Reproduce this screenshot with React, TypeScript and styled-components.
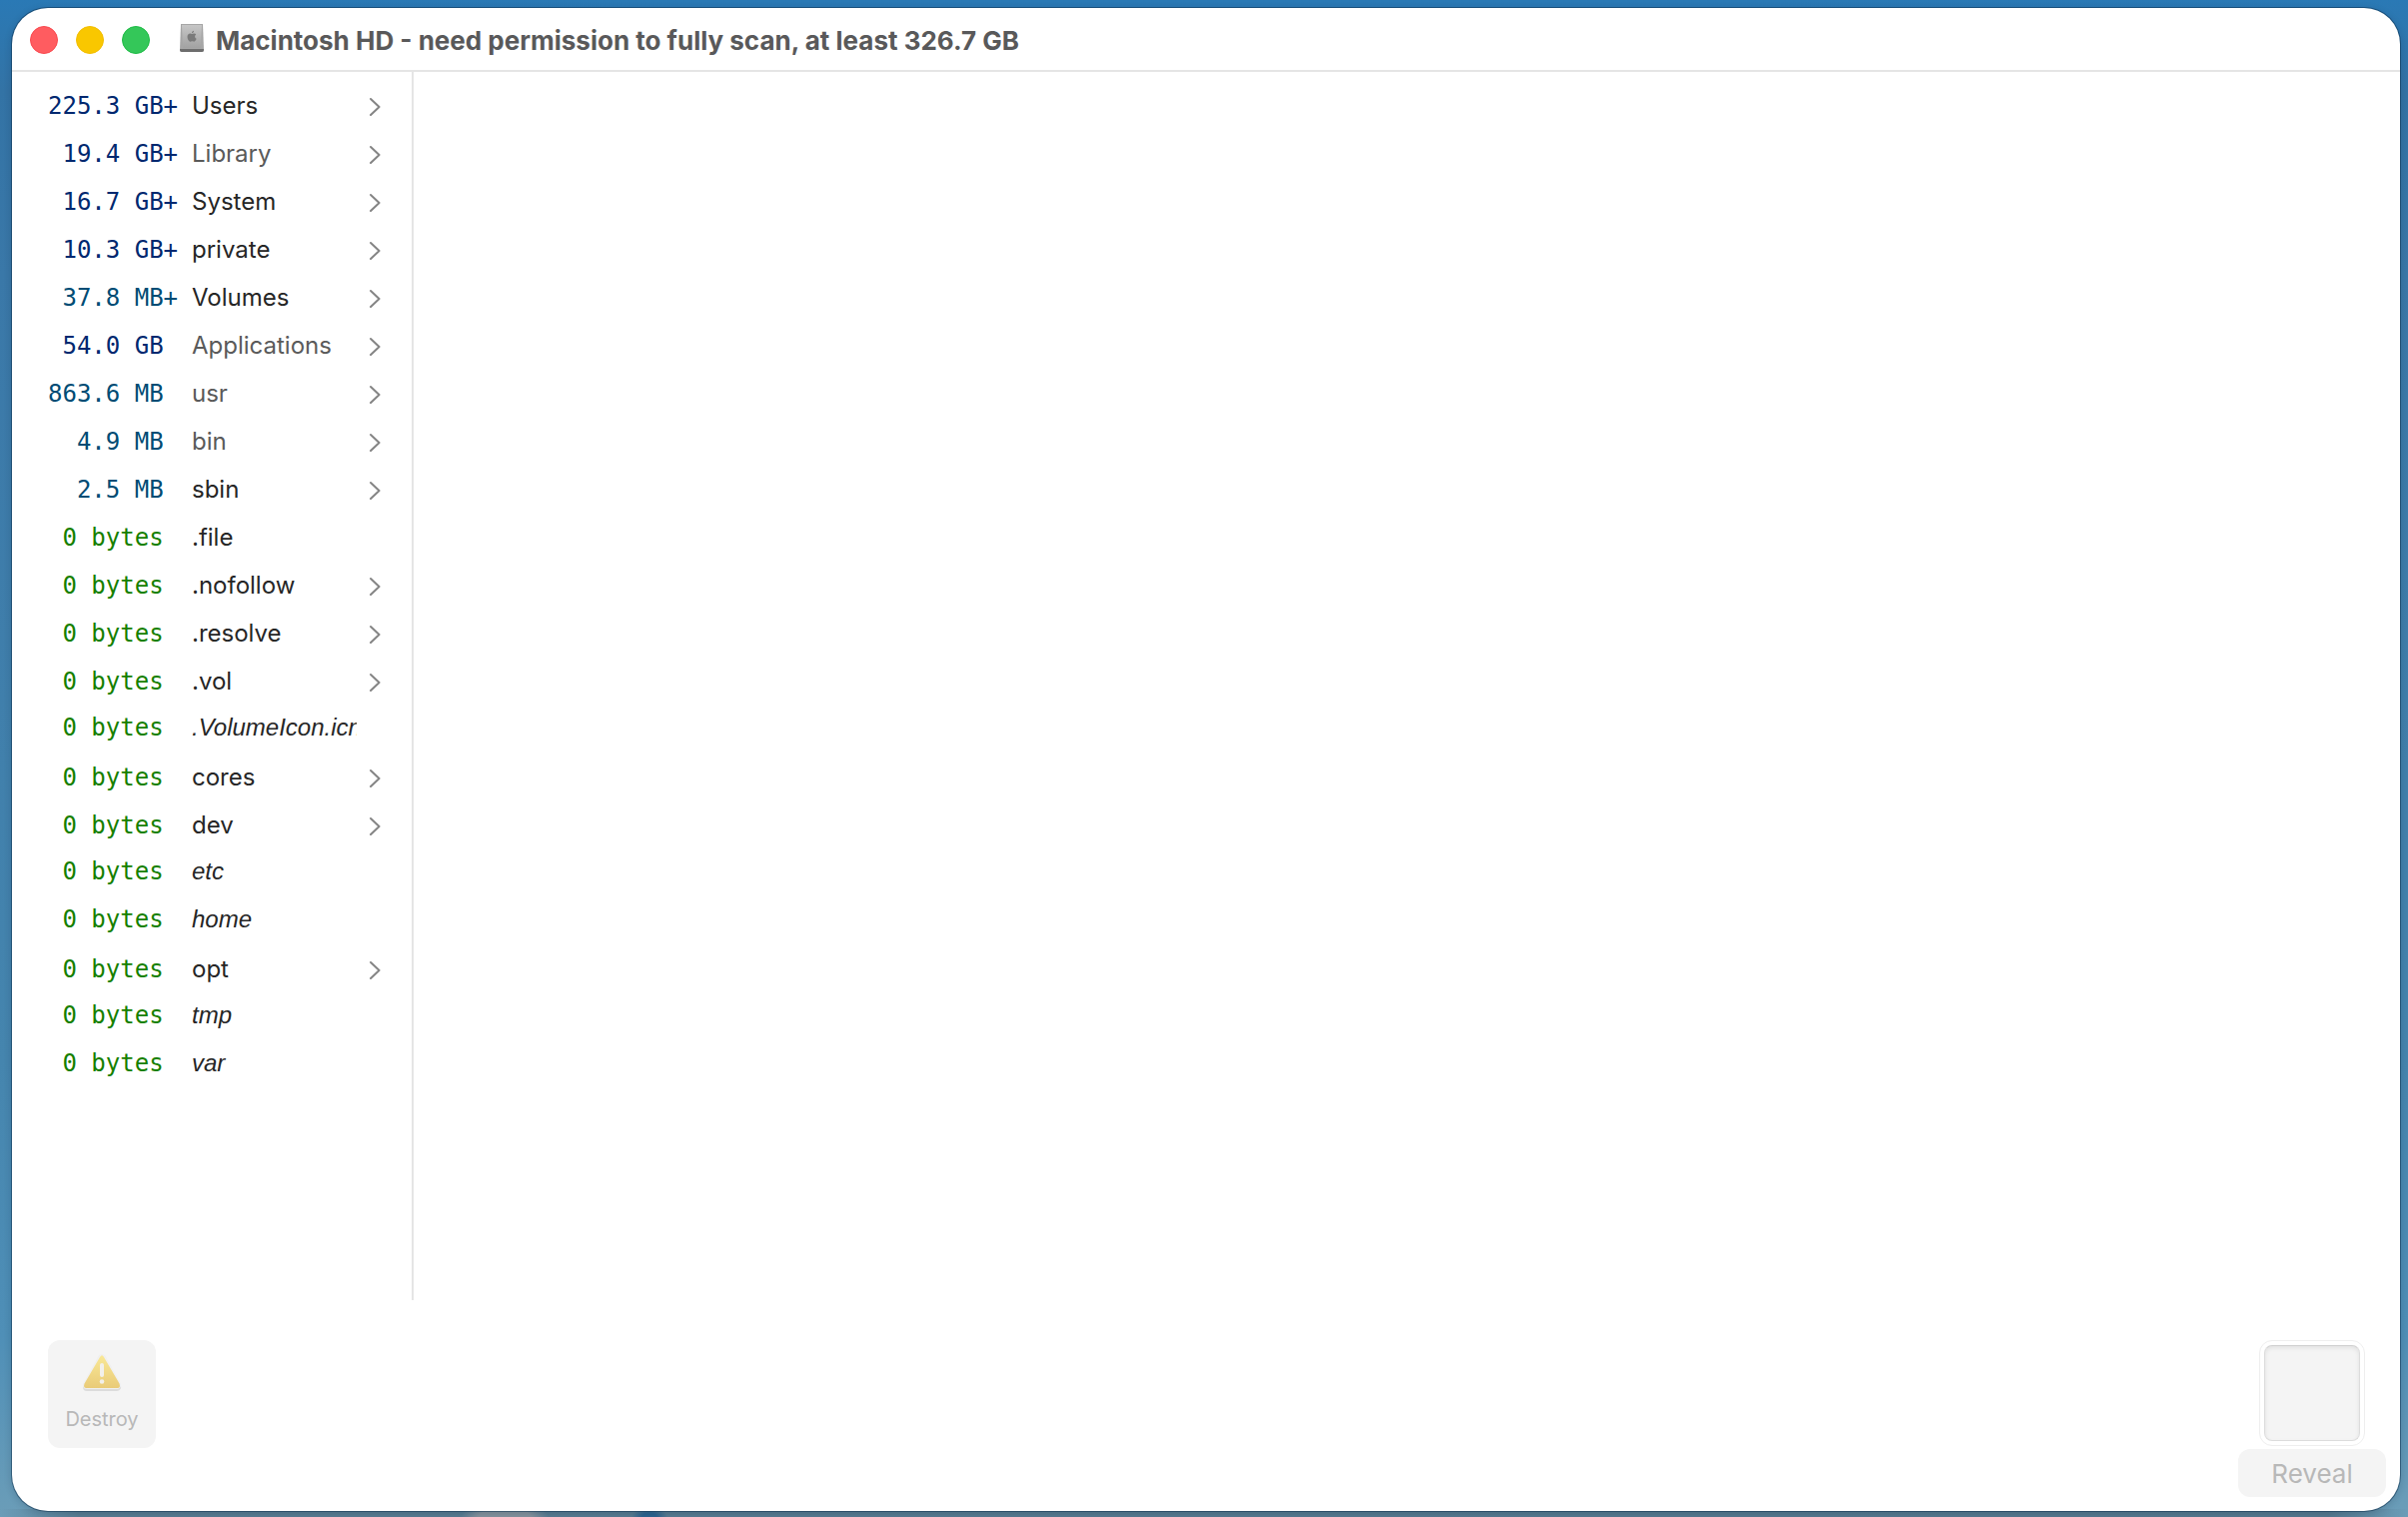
import React from "react";
import styled, { createGlobalStyle, css } from "styled-components";

const ui = `Inter, "Liberation Sans", sans-serif`;

const GlobalStyle = createGlobalStyle`
  *, *::before, *::after { box-sizing: border-box; }
  body { margin: 0; background: #2a79b5; font-family: ${ui}; }
`;

const Desktop = styled.div`
  display: flex;
  min-height: 100vh;
  padding: 8px 8px 6px 12px;
  background:
    radial-gradient(ellipse 44px 14px at 505px 100%, #84939e 60%, transparent 100%),
    radial-gradient(ellipse 18px 10px at 650px 100%, #2c648f 40%, transparent 100%),
    linear-gradient(90deg, transparent 0, #587d93 80px, #55798f calc(100% - 80px), transparent 100%) 0 100% / 100% 8px no-repeat,
    linear-gradient(180deg, #2a79b5 0%, #3373a5 6%, #3a78a8 18%, #4585ae 70%, #4f8fb7 88%, #6b9db8 100%);
`;

const Window = styled.main`
  flex: 1;
  display: flex;
  flex-direction: column;
  min-width: 0;
  overflow: hidden;
  background: #fff;
  border-radius: 36px;
  box-shadow: 0 0 0 1px rgba(10, 45, 75, 0.5), 0 2px 8px rgba(0, 20, 40, 0.2);
`;

const TitleBar = styled.header`
  display: flex;
  align-items: center;
  height: 64px;
  padding: 2px 18px 0;
  border-bottom: 2px solid #e5e5e5;
`;

const Lights = styled.div`
  display: flex;
  gap: 18px;
  margin-right: 30px;
`;

const Light = styled.button<{ $fill: string; $edge: string }>`
  width: 28px;
  height: 28px;
  padding: 0;
  border: 1px solid ${(p) => p.$edge};
  border-radius: 50%;
  background: ${(p) => p.$fill};
`;

const DriveIcon = styled.svg`
  width: 24px;
  height: 28px;
  margin: 0 12px 4px 0;
`;

const Title = styled.h1`
  margin: 0;
  padding-top: 2px;
  color: #59595a;
  font-size: 26px;
  line-height: 32px;
  font-weight: 700;
  white-space: nowrap;
`;

const Body = styled.section`
  flex: 1;
  display: flex;
`;

const Column = styled.ul`
  width: 402px;
  margin: 0;
  padding: 10px 31px 0 36px;
  list-style: none;
  border-right: 2px solid #e5e5e5;
`;

const Row = styled.button<{ $link?: boolean }>`
  display: grid;
  grid-template-columns: 144px 165px 1fr;
  align-items: center;
  width: 100%;
  height: 48px;
  padding: 0;
  border: 0;
  background: none;
  text-align: left;
  ${(p) => p.$link && css`padding-bottom: 4px;`}
`;

const tones = { gb: "#00286f", mb: "#004c74", zero: "#168000" };

const Size = styled.span<{ $tone: keyof typeof tones }>`
  color: ${(p) => tones[p.$tone]};
  font: 24px/32px "DejaVu Sans Mono", monospace;
  white-space: pre;
`;

const Name = styled.span<{ $muted?: boolean; $link?: boolean }>`
  overflow: hidden;
  color: ${(p) => (p.$muted ? "#5a5a5a" : "#262626")};
  font-family: ${(p) => (p.$link ? `"Liberation Sans", sans-serif` : ui)};
  font-size: 24px;
  line-height: 32px;
  font-style: ${(p) => (p.$link ? "italic" : "normal")};
  white-space: nowrap;
`;

const Chevron = styled.svg`
  width: 12px;
  height: 20px;
  justify-self: end;
`;

const Footer = styled.footer`
  display: flex;
  justify-content: space-between;
  align-items: flex-start;
  padding: 40px 14px 14px 36px;
`;

const Destroy = styled.button`
  display: flex;
  flex-direction: column;
  align-items: center;
  gap: 12px;
  width: 108px;
  height: 108px;
  padding: 13px 0 0;
  border: 0;
  border-radius: 12px;
  background: #f4f4f4;
  color: #b8b8b8;
  font: 20px/28px ${ui};
`;

const WarningIcon = styled.svg`
  width: 44px;
  height: 40px;
`;

const RevealGroup = styled.div`
  display: flex;
  flex-direction: column;
  align-items: center;
  gap: 3px;
`;

const Well = styled.div`
  width: 106px;
  height: 106px;
  padding: 4px;
  border: 1px solid #eeeeee;
  border-radius: 13px;
`;

const WellInner = styled.div`
  height: 100%;
  border: 1px solid #dcdcdc;
  border-top-color: #cfcfcf;
  border-radius: 8px;
  background: #f4f4f4;
  box-shadow: inset 0 2px 4px rgba(0, 0, 0, 0.08);
`;

const Reveal = styled.button`
  width: 148px;
  height: 48px;
  padding: 2px 0 0;
  border: 0;
  border-radius: 12px;
  background: #f4f4f4;
  color: #b8b8b8;
  font: 26px/32px ${ui};
`;

type Item = { size: string; tone: keyof typeof tones; name: string; muted?: boolean; link?: boolean; folder?: boolean };

const items: Item[] = [
  { size: "225.3 GB+", tone: "gb", name: "Users", folder: true },
  { size: " 19.4 GB+", tone: "gb", name: "Library", muted: true, folder: true },
  { size: " 16.7 GB+", tone: "gb", name: "System", folder: true },
  { size: " 10.3 GB+", tone: "gb", name: "private", folder: true },
  { size: " 37.8 MB+", tone: "mb", name: "Volumes", folder: true },
  { size: " 54.0 GB", tone: "gb", name: "Applications", muted: true, folder: true },
  { size: "863.6 MB", tone: "mb", name: "usr", muted: true, folder: true },
  { size: "  4.9 MB", tone: "mb", name: "bin", muted: true, folder: true },
  { size: "  2.5 MB", tone: "mb", name: "sbin", folder: true },
  { size: " 0 bytes", tone: "zero", name: ".file" },
  { size: " 0 bytes", tone: "zero", name: ".nofollow", folder: true },
  { size: " 0 bytes", tone: "zero", name: ".resolve", folder: true },
  { size: " 0 bytes", tone: "zero", name: ".vol", folder: true },
  { size: " 0 bytes", tone: "zero", name: ".VolumeIcon.icns", link: true },
  { size: " 0 bytes", tone: "zero", name: "cores", folder: true },
  { size: " 0 bytes", tone: "zero", name: "dev", folder: true },
  { size: " 0 bytes", tone: "zero", name: "etc", link: true },
  { size: " 0 bytes", tone: "zero", name: "home", link: true },
  { size: " 0 bytes", tone: "zero", name: "opt", folder: true },
  { size: " 0 bytes", tone: "zero", name: "tmp", link: true },
  { size: " 0 bytes", tone: "zero", name: "var", link: true },
];

export default function App() {
  return (
    <Desktop>
      <GlobalStyle />
      <Window>
        <TitleBar>
          <Lights>
            <Light type="button" aria-label="Close" $fill="#ff5c60" $edge="#f8484e" />
            <Light type="button" aria-label="Minimize" $fill="#f9c700" $edge="#f2bd00" />
            <Light type="button" aria-label="Zoom" $fill="#34c759" $edge="#1dbb45" />
          </Lights>
          <DriveIcon viewBox="0 0 24 28" aria-hidden="true">
            <defs>
              <linearGradient id="metal" x1="0" y1="0" x2="0" y2="1">
                <stop offset="0" stopColor="#c6c6c6" />
                <stop offset="1" stopColor="#a2a2a2" />
              </linearGradient>
            </defs>
            <path d="M1 0H23L24 26Q24 28 22 28H2Q0 28 0 26Z" fill="#a6a6a6" />
            <path d="M2 1H22L21 24H3Z" fill="url(#metal)" />
            <path d="M0 25H24V26Q24 28 22 28H2Q0 28 0 26Z" fill="#6d6d6d" />
            <path d="M12 9.2C12 7.8 12.8 7 14 6.8C14 8.2 13.2 9 12 9.2ZM12.2 10C13 9.9 13.5 9.4 14.3 9.4C15.1 9.4 15.8 9.8 16.2 10.4C14.5 11.5 14.7 13.9 16.6 14.7C16 16.3 15 17.7 14 17.7C13.3 17.7 13 17.3 12.2 17.3C11.4 17.3 11 17.7 10.4 17.7C8.9 17.6 7.5 15 7.5 12.8C7.5 10.7 8.8 9.4 10.3 9.4C11.1 9.4 11.6 9.9 12.2 10Z" fill="#7a7a7a" />
          </DriveIcon>
          <Title>Macintosh HD - need permission to fully scan, at least 326.7 GB</Title>
        </TitleBar>
        <Body>
          <Column>
            {items.map((item) => (
              <li key={item.name}>
                <Row type="button" $link={item.link}>
                  <Size $tone={item.tone}>{item.size}</Size>
                  <Name $muted={item.muted} $link={item.link}>{item.name}</Name>
                  {item.folder && (
                    <Chevron viewBox="0 0 12 20" fill="none" stroke="#848484" strokeWidth="2" strokeLinecap="round" strokeLinejoin="round" aria-hidden="true">
                      <path d="M2 3L10.5 11L2 19" />
                    </Chevron>
                  )}
                </Row>
              </li>
            ))}
          </Column>
        </Body>
        <Footer>
          <Destroy type="button" disabled>
            <WarningIcon viewBox="0 0 44 40" aria-hidden="true">
              <defs>
                <linearGradient id="warn" x1="0" y1="0" x2="0" y2="1">
                  <stop offset="0" stopColor="#f9e896" />
                  <stop offset="1" stopColor="#e9cb78" />
                </linearGradient>
              </defs>
              <path d="M22 6L37 34H7Z" fill="#dcdcdc" stroke="#dcdcdc" strokeWidth="8" strokeLinejoin="round" />
              <path d="M22 5L37 32H7Z" fill="#f0f0f0" stroke="#f0f0f0" strokeWidth="8" strokeLinejoin="round" />
              <path d="M20 4Q22 0.5 24 4L39.5 30.5Q41 35 37.5 35H6.5Q3 35 4.5 30.5Z" fill="url(#warn)" />
              <path d="M22 12V22" stroke="#f2f0ea" strokeWidth="4" strokeLinecap="round" />
              <circle cx="22" cy="28.5" r="2.3" fill="#f2f0ea" />
            </WarningIcon>
            Destroy
          </Destroy>
          <RevealGroup>
            <Well><WellInner /></Well>
            <Reveal type="button" disabled>Reveal</Reveal>
          </RevealGroup>
        </Footer>
      </Window>
    </Desktop>
  );
}
